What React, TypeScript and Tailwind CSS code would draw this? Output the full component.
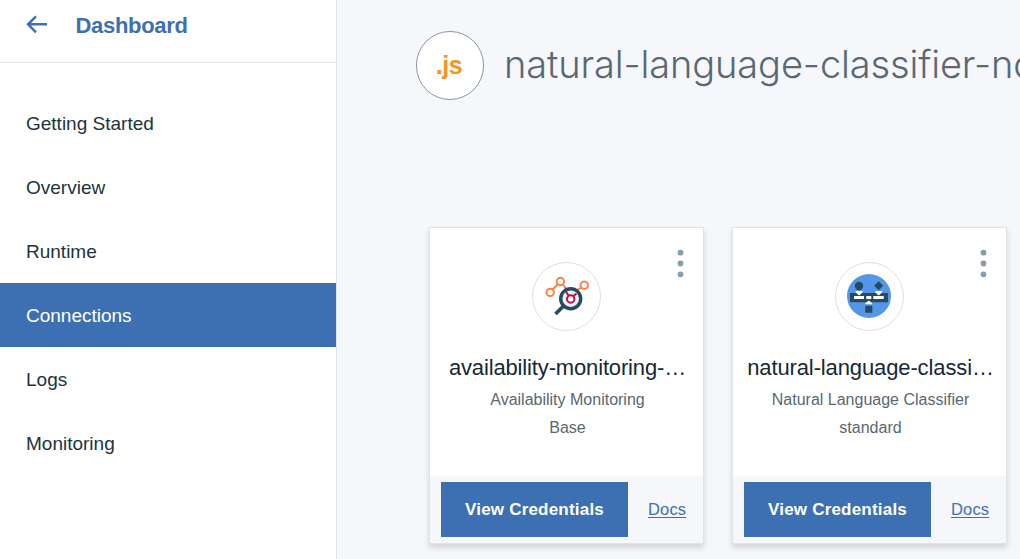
import React from "react";

const navItems = ["Getting Started", "Overview", "Runtime", "Connections", "Logs", "Monitoring"];

function MonitoringIcon() {
  return (
    <svg width="67" height="67" viewBox="0 0 67 67" fill="none">
      <g stroke="#ff8145" strokeWidth="2">
        <path d="M19.7 26.5 24.7 21.2M30 21.5 34 27.5M42 28.5 48.5 24.3" />
        <circle cx="17.2" cy="29.4" r="3.7" />
        <circle cx="27.4" cy="18.5" r="3.7" />
        <circle cx="51.3" cy="22.3" r="3.7" />
      </g>
      <circle cx="37.7" cy="35.7" r="10" fill="#e6f0fb" stroke="#264a60" strokeWidth="3.4" />
      <path d="M30.5 43 22.5 51" stroke="#264a60" strokeWidth="3.8" />
      <path d="M33 28.5 36 33.5M43.5 30.5 40 33.5" stroke="#be1238" strokeWidth="2" />
      <circle cx="37.7" cy="36" r="3.7" fill="#fff" stroke="#be1238" strokeWidth="2" />
    </svg>
  );
}

function ClassifierIcon() {
  return (
    <svg width="67" height="67" viewBox="0 0 67 67">
      <circle cx="33" cy="33" r="22" fill="#5596e6" />
      <g fill="#264a60">
        <circle cx="23" cy="23" r="4.2" />
        <path d="M42.7 18.2 47.2 22.7 42.7 27.2 38.2 22.7z" />
        <path d="M14 30h38v9.2H14zM29.3 42.7h7v7h-7z" />
      </g>
      <path
        fill="#fff"
        d="M19.7 28h6.8v1.5L23.1 32.5 19.7 29.5zM39.3 28h6.8v1.5L42.7 32.5 39.3 29.5zM29.4 41.2v-1L32.8 37.5 36.2 40.2v1zM18 33h10v3H18zM30.3 33h5v3h-5zM37.3 33h10.4v3H37.3z"
      />
    </svg>
  );
}

type CardProps = {
  name: string;
  service: string;
  plan: string;
  icon: React.ReactNode;
  nameClass: string;
};

function ServiceCard({ name, service, plan, icon, nameClass }: CardProps) {
  return (
    <article className="relative flex h-[317px] w-[275px] shrink-0 flex-col border border-[#dfe3e6] bg-white text-center shadow-[0_4px_6px_rgba(0,0,0,0.14)]">
      <button aria-label="Options" className="absolute top-[21px] right-[18px]">
        <svg width="9" height="30" viewBox="0 0 9 30" fill="#8c9ba8">
          <circle cx="4.5" cy="3.7" r="2.9" />
          <circle cx="4.5" cy="14.5" r="2.9" />
          <circle cx="4.5" cy="25.3" r="2.9" />
        </svg>
      </button>
      <div className="mt-[34px] flex size-[69px] items-center justify-center self-center rounded-full border border-[#dcdfe1]">
        {icon}
      </div>
      <h2 className={"mt-[23px] h-7 pl-0.5 text-[22px] leading-7 whitespace-nowrap text-[#152935] " + nameClass}>
        {name}
      </h2>
      <p className="mt-1 pl-0.5 text-base leading-7 text-[#5a6872]">{service}</p>
      <p className="pl-0.5 text-base leading-7 text-[#5a6872]">{plan}</p>
      <div className="mt-auto flex h-[67px] items-center bg-[#f5f7fa] pl-[11px]">
        <button className="h-[55px] w-[187px] bg-[#3d70b2] text-[17px] font-bold tracking-[0.2px] text-white">
          View Credentials
        </button>
        <a className="ml-5 text-[16.5px] tracking-[0.15px] text-[#3d70b2] underline underline-offset-2">Docs</a>
      </div>
    </article>
  );
}

export default function App() {
  return (
    <div className="flex h-[559px] w-[1020px] overflow-hidden bg-[#f5f7fb] font-['Liberation_Sans',Arial,sans-serif]">
      <aside className="w-[337px] shrink-0 border-r border-[#dfe3e6] bg-white">
        <header className="flex h-[63px] items-start border-b border-[#dfe3e6] pt-[10px] pl-[26px] text-[#3d70b2]">
          <svg className="mt-[5px]" width="22" height="19" viewBox="0 0 22 19" fill="none" stroke="currentColor" strokeWidth="2.4">
            <path d="M21 9.3H2M10 1.3 2 9.3 10 17.3" />
          </svg>
          <span className="ml-[27.5px] text-[22px] leading-8 font-bold tracking-[-0.3px]">Dashboard</span>
        </header>
        <nav className="pt-7">
          {navItems.map((item) => (
            <a
              key={item}
              className={
                item === "Connections"
                  ? "flex h-16 items-center bg-[#3d70b2] pt-0.5 pl-[26px] text-[19px] text-white"
                  : "flex h-16 items-center pt-0.5 pl-[26px] text-[19px] text-[#20343e]"
              }
            >
              {item}
            </a>
          ))}
        </nav>
      </aside>
      <main className="min-w-0 flex-1 overflow-hidden">
        <header className="flex h-[131px] items-center pl-[79px]">
          <div className="flex h-[69px] w-[68px] shrink-0 items-center justify-center rounded-full border border-[#8897a2] bg-white pr-0.5 text-[25px] font-bold tracking-[-0.5px] text-[#f7941e]">
            .js
          </div>
          <h1 className="ml-5 pb-0.5 font-['Inter'] text-[38px] font-light tracking-[-0.12px] whitespace-nowrap text-[#5a6872]">
            natural-language-classifier-nodejs
          </h1>
        </header>
        <section className="flex gap-7 pt-24 pl-[92px]">
          <ServiceCard
            name="availability-monitoring-…"
            service="Availability Monitoring"
            plan="Base"
            icon={<MonitoringIcon />}
            nameClass="tracking-[-0.15px]"
          />
          <ServiceCard
            name="natural-language-classi…"
            service="Natural Language Classifier"
            plan="standard"
            icon={<ClassifierIcon />}
            nameClass="tracking-[-0.12px]"
          />
        </section>
      </main>
    </div>
  );
}
